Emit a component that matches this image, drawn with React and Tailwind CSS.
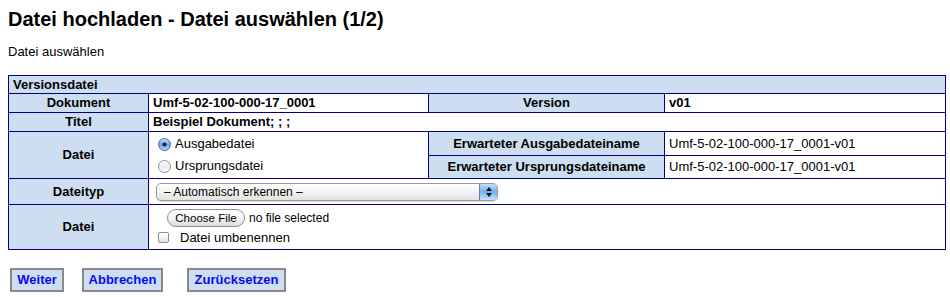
import React, { useState } from "react";

const BORDER = "border border-[#000080]";

function Radio({ checked }) {
  return (
    <svg width="13" height="13" viewBox="0 0 13 13" className="shrink-0">
      <defs>
        <linearGradient id={checked ? "rOn" : "rOff"} x1="0" y1="0" x2="0" y2="1">
          {checked ? (
            <>
              <stop offset="0" stopColor="#cfe3fb" />
              <stop offset="0.5" stopColor="#6aa5ea" />
              <stop offset="1" stopColor="#b7d8fb" />
            </>
          ) : (
            <>
              <stop offset="0" stopColor="#ffffff" />
              <stop offset="0.5" stopColor="#ececec" />
              <stop offset="1" stopColor="#ffffff" />
            </>
          )}
        </linearGradient>
      </defs>
      <circle
        cx="6.5"
        cy="6.5"
        r="6"
        fill={`url(#${checked ? "rOn" : "rOff"})`}
        stroke={checked ? "#4b6c99" : "#8e8e8e"}
        strokeWidth="1"
      />
      {checked && <circle cx="6.5" cy="6.5" r="2" fill="#1c1c2c" />}
    </svg>
  );
}

function AquaSelect({ label }) {
  return (
    <div className="ml-[3px] flex h-[18px] w-[342px] items-stretch rounded-[5px] border border-[#9a9a9a] bg-gradient-to-b from-white via-[#f3f3f3] to-[#e2e2e2] shadow-[0_1px_1px_rgba(0,0,0,0.15)]">
      <span className="flex-1 pl-[7px] text-[12px] leading-[16px] text-black">
        {label}
      </span>
      <span className="flex w-[18px] flex-col items-center justify-center gap-[2px] rounded-r-[4px] border-l border-[#6a7fb0] bg-gradient-to-b from-[#bfdcfa] via-[#6fb0f0] to-[#c6e4fd]">
        <svg width="6" height="4" viewBox="0 0 6 4">
          <path d="M3 0 L6 4 L0 4 Z" fill="#111" />
        </svg>
        <svg width="6" height="4" viewBox="0 0 6 4">
          <path d="M0 0 L6 0 L3 4 Z" fill="#111" />
        </svg>
      </span>
    </div>
  );
}

export default function App() {
  const [source, setSource] = useState("ausgabe");

  return (
    <div className="min-h-[297px] bg-white p-2 text-[13px] text-black [font-family:'Liberation_Sans',Arial,sans-serif]">
      <h1 className="text-[20px] font-bold leading-[23px]">
        Datei hochladen - Datei auswählen (1/2)
      </h1>
      <p className="mt-[13px] leading-[15px]">Datei auswählen</p>

      <table className="mt-[16px] w-[937px] table-fixed">
        <colgroup>
          <col className="w-[140px]" />
          <col className="w-[280px]" />
          <col className="w-[236px]" />
          <col className="w-[281px]" />
        </colgroup>
        <tbody>
          <tr>
            <td colSpan={4} className={`${BORDER} h-[18px] bg-[#cddef0] px-[4px] py-0 text-left font-bold leading-[16px]`}>
              Versionsdatei
            </td>
          </tr>
          <tr>
            <td className={`${BORDER} h-[19px] bg-[#cddef0] py-0 text-center font-bold leading-[16px]`}>Dokument</td>
            <td className={`${BORDER} px-[4px] py-0 font-bold leading-[16px]`}>Umf-5-02-100-000-17_0001</td>
            <td className={`${BORDER} bg-[#cddef0] py-0 text-center font-bold leading-[16px]`}>Version</td>
            <td className={`${BORDER} px-[4px] py-0 font-bold leading-[16px]`}>v01</td>
          </tr>
          <tr>
            <td className={`${BORDER} h-[19px] bg-[#cddef0] py-0 text-center font-bold leading-[16px]`}>Titel</td>
            <td colSpan={3} className={`${BORDER} px-[4px] py-0 font-bold leading-[16px]`}>
              Beispiel Dokument; ; ;
            </td>
          </tr>
          <tr>
            <td rowSpan={2} className={`${BORDER} bg-[#cddef0] py-0 text-center font-bold`}>Datei</td>
            <td rowSpan={2} className={`${BORDER} px-[4px] py-0`}>
              <div className="flex flex-col gap-[8px] pl-[5px]">
                <label className="flex items-center gap-[4px] leading-[14px]" onClick={() => setSource("ausgabe")}>
                  <Radio checked={source === "ausgabe"} />
                  <span>Ausgabedatei</span>
                </label>
                <label className="flex items-center gap-[4px] leading-[14px]" onClick={() => setSource("ursprung")}>
                  <Radio checked={source === "ursprung"} />
                  <span>Ursprungsdatei</span>
                </label>
              </div>
            </td>
            <td className={`${BORDER} h-[24px] bg-[#cddef0] py-0 text-center font-bold leading-[16px]`}>
              Erwarteter Ausgabedateiname
            </td>
            <td className={`${BORDER} px-[4px] py-0 leading-[16px]`}>Umf-5-02-100-000-17_0001-v01</td>
          </tr>
          <tr>
            <td className={`${BORDER} h-[23px] bg-[#cddef0] py-0 text-center font-bold leading-[16px]`}>
              Erwarteter Ursprungsdateiname
            </td>
            <td className={`${BORDER} px-[4px] py-0 leading-[16px]`}>Umf-5-02-100-000-17_0001-v01</td>
          </tr>
          <tr>
            <td className={`${BORDER} h-[26px] bg-[#cddef0] py-0 text-center font-bold`}>Dateityp</td>
            <td colSpan={3} className={`${BORDER} px-[4px] py-0`}>
              <AquaSelect label="– Automatisch erkennen –" />
            </td>
          </tr>
          <tr>
            <td className={`${BORDER} h-[45px] bg-[#cddef0] py-0 text-center font-bold`}>Datei</td>
            <td colSpan={3} className={`${BORDER} px-[4px] py-0`}>
              <div className="flex flex-col gap-[3px]">
                <div className="flex items-center gap-[4px] pl-[14px]">
                  <span className="flex h-[18px] w-[78px] items-center justify-center rounded-full border border-[#8f8f8f] bg-gradient-to-b from-white via-[#f4f4f4] to-[#dcdcdc] text-[11.5px] leading-[14px]">
                    Choose File
                  </span>
                  <span className="text-[12px] leading-[14px]">no file selected</span>
                </div>
                <label className="flex items-center gap-[11px] pl-[5px] leading-[15px]">
                  <span className="h-[11px] w-[11px] rounded-[2px] border border-[#8e8e8e] bg-gradient-to-b from-white to-[#e6e6e6]" />
                  <span>Datei umbenennen</span>
                </label>
              </div>
            </td>
          </tr>
        </tbody>
      </table>

      <div className="mt-[18px] flex items-center">
        <button className="ml-[2px] h-[24px] w-[54px] border-2 border-[#8a8a8a] bg-[#cddef0] text-[13px] font-bold text-[#0a0af0]">
          Weiter
        </button>
        <button className="ml-[18px] h-[24px] w-[81px] border-2 border-[#8a8a8a] bg-[#cddef0] text-[13px] font-bold text-[#0a0af0]">
          Abbrechen
        </button>
        <button className="ml-[24px] h-[24px] w-[99px] border-2 border-[#8a8a8a] bg-[#cddef0] text-[13px] font-bold text-[#0a0af0]">
          Zurücksetzen
        </button>
      </div>
    </div>
  );
}
